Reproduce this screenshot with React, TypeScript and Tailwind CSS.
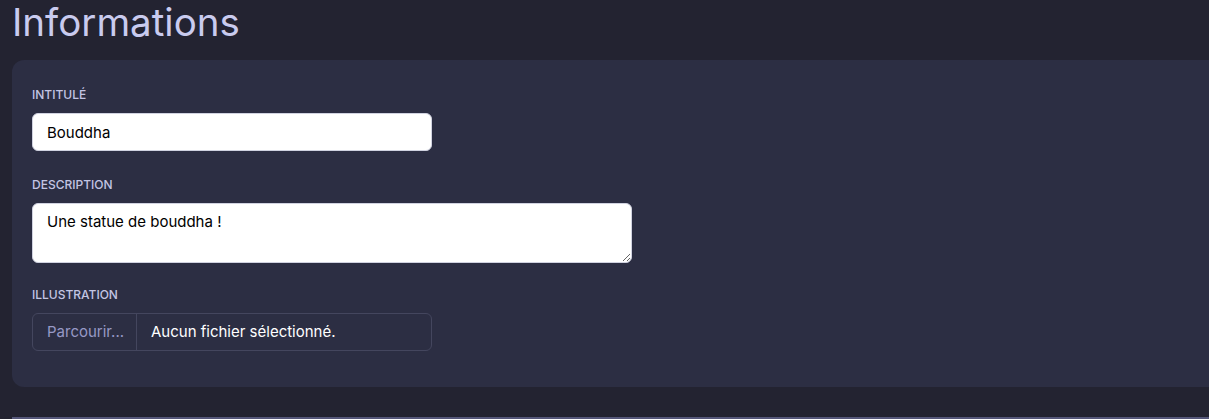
import { useState } from 'react';

// Édition d'une œuvre : bloc "Informations" avec intitulé, description et illustration.

export default function App() {
  const [title, setTitle] = useState('Bouddha');
  const [description, setDescription] = useState('Une statue de bouddha !');
  const [fileName, setFileName] = useState<string | null>(null);

  return (
    <div
      className="min-h-[419px] w-full overflow-hidden bg-[#232331] pl-3"
      style={{ fontFamily: 'Inter, "Noto Sans", sans-serif' }}
    >
      <h1 className="text-[38.5px] leading-[44px] text-[#c9cbef] font-normal">
        Informations
      </h1>

      <div className="mt-[16px] rounded-l-xl bg-[#2c2e43] pl-5 pt-[27px] pb-9">
        <label className="block">
          <span className="block text-[12px] leading-4 font-medium uppercase text-[#c3c5e3]">Intitulé</span>
          <input
            value={title}
            onChange={(e) => setTitle(e.target.value)}
            className="mt-[10px] block h-[38px] w-[400px] rounded-md border border-[#d0d2e0] bg-white px-[14px] text-[15px] text-black outline-none"
          />
        </label>

        <label className="mt-[26px] block">
          <span className="block text-[12px] leading-4 font-medium uppercase text-[#c3c5e3]">Description</span>
          <textarea
            value={description}
            onChange={(e) => setDescription(e.target.value)}
            className="mt-[10px] block h-[60px] w-[600px] rounded-md border border-[#d0d2e0] bg-white px-[14px] py-[7px] text-[15px] leading-[22px] text-black outline-none"
          />
        </label>

        <div className="mt-[24px]">
          <span className="block text-[12px] leading-4 font-medium uppercase text-[#c3c5e3]">Illustration</span>
          <label className="mt-[10px] flex h-[38px] w-[400px] cursor-pointer overflow-hidden rounded-md border border-[#44465e] text-[15px]">
            <span className="flex w-[104px] items-center border-r border-[#44465e] px-[14px] text-[#9799c6]">
              Parcourir...
            </span>
            <span className="flex items-center px-[14px] text-white">
              {fileName ?? 'Aucun fichier sélectionné.'}
            </span>
            <input
              type="file"
              className="hidden"
              onChange={(e) => setFileName(e.target.files?.[0]?.name ?? null)}
            />
          </label>
        </div>
      </div>

      <div className="mt-[30px] h-[3px] border-t-2 border-[#55577a]" />
    </div>
  );
}
